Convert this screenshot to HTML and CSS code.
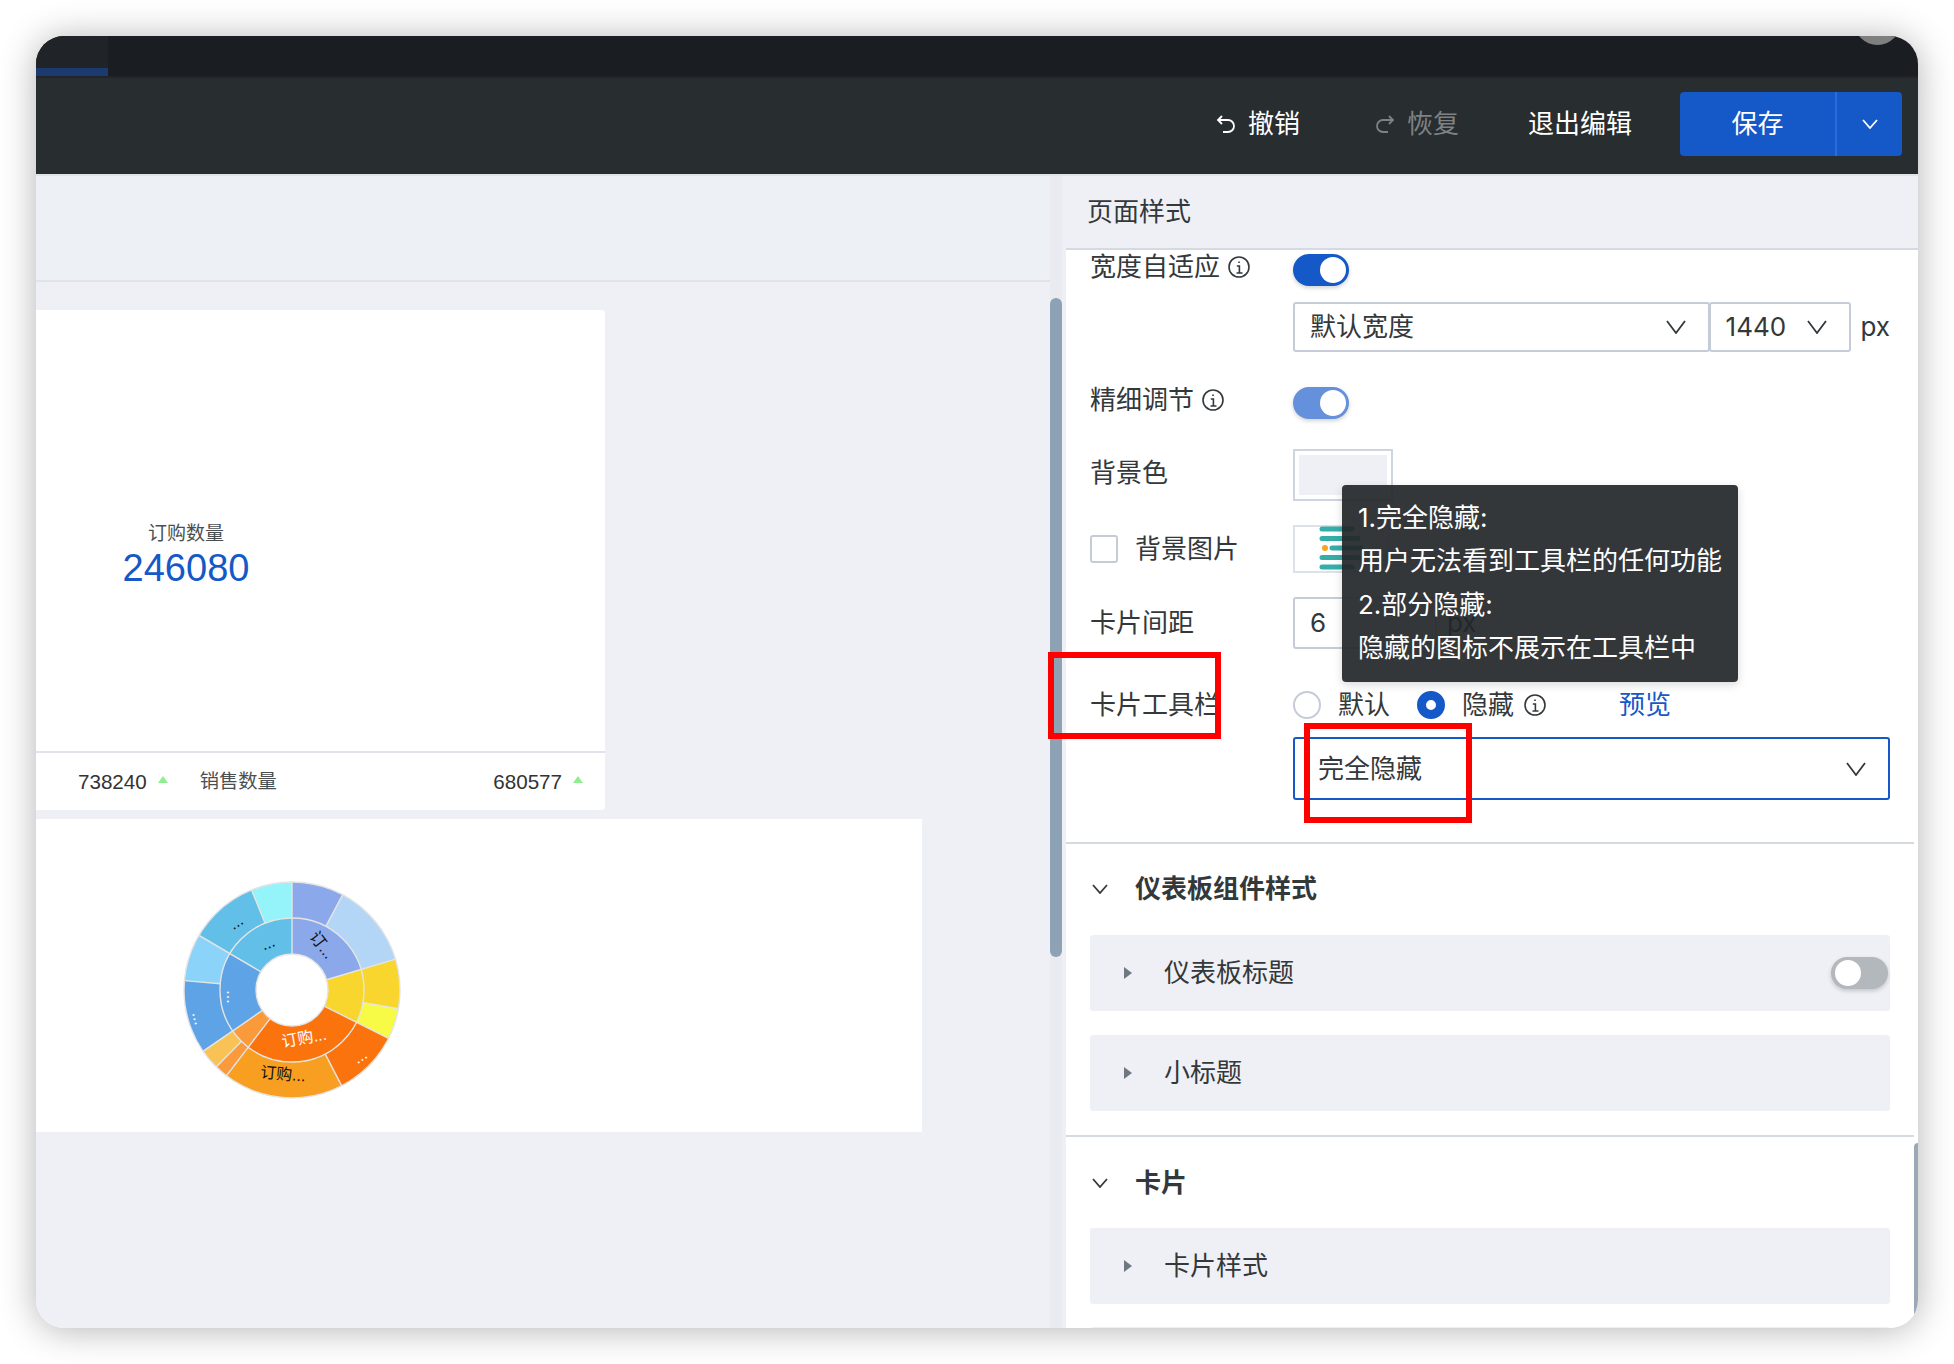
FILE: index.html
```html
<!DOCTYPE html>
<html lang="zh">
<head>
<meta charset="utf-8">
<title>页面样式</title>
<link rel="stylesheet" href="styles.css">
</head>
<body>
<div class="window">
  <div class="tabbar"><div class="tab"></div></div>
  <div class="toolbar">
    <div class="tool"><svg class="tool-icon" viewBox="0 0 22 22"><path d="M7 3 3 7l4 4M3 7h10a6 6 0 0 1 0 12H8"/></svg><span>撤销</span></div>
    <div class="tool tool-off"><svg class="tool-icon" viewBox="0 0 22 22"><path d="M15 3l4 4-4 4M19 7H9a6 6 0 0 0 0 12h5"/></svg><span>恢复</span></div>
    <div class="tool tool-exit">退出编辑</div>
    <div class="save"><div class="save-main">保存</div><div class="save-more"><svg class="chev-sm" viewBox="0 0 16 10"><path d="M1 1l7 8 7-8"/></svg></div></div>
  </div>
  <div class="main">
    <div class="canvas">
      <div class="band"></div>
      <div class="card-kpi">
        <div class="kpi-body">
          <div class="kpi-block">
            <div class="kpi-label">订购数量</div>
            <div class="kpi-num">246080</div>
          </div>
        </div>
        <div class="kpi-foot">
          <span class="foot-num">738240</span><span class="tri"></span>
          <span class="foot-label">销售数量</span>
          <span class="foot-num foot-push">680577</span><span class="tri"></span>
        </div>
      </div>
      <div class="card-chart">
        <svg class="sunburst" viewBox="-110 -110 220 220">
          <g fill="none" stroke-width="36">
            <circle r="90" pathLength="360" stroke="#8aa8ea" stroke-dasharray="28 360" transform="rotate(-90)"/>
            <circle r="90" pathLength="360" stroke="#b3d6f7" stroke-dasharray="45.4 360" transform="rotate(-62)"/>
            <circle r="90" pathLength="360" stroke="#f8d62d" stroke-dasharray="26.6 360" transform="rotate(-16.6)"/>
            <circle r="90" pathLength="360" stroke="#f8fb45" stroke-dasharray="16.5 360" transform="rotate(10)"/>
            <circle r="90" pathLength="360" stroke="#fb730c" stroke-dasharray="36.1 360" transform="rotate(26.5)"/>
            <circle r="90" pathLength="360" stroke="#f89e20" stroke-dasharray="64.7 360" transform="rotate(62.6)"/>
            <circle r="90" pathLength="360" stroke="#fb9a3b" stroke-dasharray="7.3 360" transform="rotate(127.3)"/>
            <circle r="90" pathLength="360" stroke="#f8c255" stroke-dasharray="11.1 360" transform="rotate(134.6)"/>
            <circle r="90" pathLength="360" stroke="#5ea3e6" stroke-dasharray="39.3 360" transform="rotate(145.7)"/>
            <circle r="90" pathLength="360" stroke="#8bd3f9" stroke-dasharray="25.8 360" transform="rotate(185)"/>
            <circle r="90" pathLength="360" stroke="#62bfe8" stroke-dasharray="37.2 360" transform="rotate(210.8)"/>
            <circle r="90" pathLength="360" stroke="#94f4fa" stroke-dasharray="22 360" transform="rotate(248)"/>
            <circle r="54" pathLength="360" stroke="#8aa8ea" stroke-dasharray="73.4 360" transform="rotate(-90)"/>
            <circle r="54" pathLength="360" stroke="#f8d62d" stroke-dasharray="43.3 360" transform="rotate(-16.6)"/>
            <circle r="54" pathLength="360" stroke="#fb730c" stroke-dasharray="100.8 360" transform="rotate(26.7)"/>
            <circle r="54" pathLength="360" stroke="#fb9a3b" stroke-dasharray="17.7 360" transform="rotate(127.5)"/>
            <circle r="54" pathLength="360" stroke="#5ea3e6" stroke-dasharray="64.8 360" transform="rotate(145.2)"/>
            <circle r="54" pathLength="360" stroke="#62bfe8" stroke-dasharray="60 360" transform="rotate(210)"/>
          </g>
          <g fill="none" stroke="#e4e4e4" stroke-width="1.4">
            <circle r="36"/><circle r="72"/><circle r="108"/>
          </g>
          <g stroke="#e4e4e4" stroke-width="1.4">
            <line y1="-36" y2="-108"/>
            <line y1="-72" y2="-108" transform="rotate(28)"/>
            <line y1="-36" y2="-108" transform="rotate(73.4)"/>
            <line y1="-72" y2="-108" transform="rotate(100)"/>
            <line y1="-36" y2="-108" transform="rotate(116.6)"/>
            <line y1="-72" y2="-108" transform="rotate(152.6)"/>
            <line y1="-36" y2="-108" transform="rotate(217.4)"/>
            <line y1="-72" y2="-108" transform="rotate(224.6)"/>
            <line y1="-36" y2="-108" transform="rotate(235.4)"/>
            <line y1="-72" y2="-108" transform="rotate(275)"/>
            <line y1="-36" y2="-108" transform="rotate(300.4)"/>
            <line y1="-72" y2="-108" transform="rotate(338)"/>
          </g>
          <g class="sb-text">
            <text transform="translate(30 -45) rotate(52)">订...</text>
            <text transform="translate(-24 -47) rotate(-22)">...</text>
            <text transform="translate(-56 -68) rotate(-32)">...</text>
            <text class="sb-white" transform="translate(-60 7) rotate(90)">...</text>
            <text class="sb-white" transform="translate(-93 28) rotate(75)">...</text>
            <text class="sb-white" transform="translate(12 48) rotate(-10)">订购...</text>
            <text transform="translate(-9 84) rotate(5)">订购...</text>
            <text class="sb-white" transform="translate(68 66) rotate(-32)">...</text>
          </g>
        </svg>
      </div>
    </div>
    <div class="track"><div class="thumb"></div></div>
    <div class="strip"></div>
    <div class="panel">
      <div class="panel-head">页面样式</div>
      <div class="panel-body">
        <div class="row row-1">
          <div class="label label-top">宽度自适应<svg class="info" viewBox="0 0 24 24"><circle cx="12" cy="12" r="10"/><path d="M12 6.5v1.6M9.8 11H12.4v7M9.5 18h6"/></svg></div>
          <div class="toggle"><i class="knob"></i></div>
        </div>
        <div class="row row-2">
          <div class="label"></div>
          <div class="select select-wide"><span>默认宽度</span><svg class="chev" viewBox="0 0 20 14"><path d="M1 1l9 12 9-12"/></svg></div>
          <div class="select select-num"><span>1440</span><svg class="chev" viewBox="0 0 20 14"><path d="M1 1l9 12 9-12"/></svg></div>
          <span class="unit">px</span>
        </div>
        <div class="row row-3">
          <div class="label label-top">精细调节<svg class="info" viewBox="0 0 24 24"><circle cx="12" cy="12" r="10"/><path d="M12 6.5v1.6M9.8 11H12.4v7M9.5 18h6"/></svg></div>
          <div class="toggle toggle-soft"><i class="knob"></i></div>
        </div>
        <div class="row row-4">
          <div class="label label-swatch">背景色</div>
          <div class="swatch"><div class="swatch-fill"></div></div>
        </div>
        <div class="row row-5">
          <div class="label"><span class="check"></span>背景图片</div>
          <div class="picture">
            <svg class="bars" viewBox="0 0 44 46">
              <g stroke="#35aeaa" stroke-width="5" stroke-linecap="round">
                <path d="M3 3h30M3 12.500h36M13 22h30M3 31.500h36M3 41h30"/>
              </g>
              <circle cx="6" cy="22" r="3" fill="#f5a623"/>
            </svg>
          </div>
        </div>
        <div class="row row-6">
          <div class="label">卡片间距</div>
          <div class="input">6</div>
          <span class="unit unit-gap">px</span>
        </div>
        <div class="row row-7">
          <div class="label">卡片工具栏</div>
          <span class="radio"></span><span class="radio-text">默认</span>
          <span class="radio radio-on"></span><span class="radio-text">隐藏</span>
          <svg class="info" viewBox="0 0 24 24"><circle cx="12" cy="12" r="10"/><path d="M12 6.5v1.6M9.8 11H12.4v7M9.5 18h6"/></svg>
          <span class="link">预览</span>
        </div>
        <div class="row row-8">
          <div class="label"></div>
          <div class="select select-focus"><span>完全隐藏</span><svg class="chev" viewBox="0 0 20 14"><path d="M1 1l9 12 9-12"/></svg></div>
        </div>
        <div class="divider divider-1"></div>
        <div class="section"><svg class="chev-sm" viewBox="0 0 16 10"><path d="M1 1l7 8 7-8"/></svg><span>仪表板组件样式</span></div>
        <div class="item"><span class="caret"></span><span>仪表板标题</span><div class="toggle toggle-off"><i class="knob"></i></div></div>
        <div class="item item-next"><span class="caret"></span><span>小标题</span></div>
        <div class="divider divider-2"></div>
        <div class="section section-2"><svg class="chev-sm" viewBox="0 0 16 10"><path d="M1 1l7 8 7-8"/></svg><span>卡片</span></div>
        <div class="item item-tight"><span class="caret"></span><span>卡片样式</span></div>
        <div class="item item-clip"></div>
      </div>
    </div>
  </div>
  <div class="avatar"></div>
  <div class="panel-scroll"></div>
  <div class="tooltip">
    <p>1.完全隐藏:</p>
    <p>用户无法看到工具栏的任何功能</p>
    <p>2.部分隐藏:</p>
    <p>隐藏的图标不展示在工具栏中</p>
  </div>
  <div class="mark mark-label"></div>
  <div class="mark mark-select"></div>
</div>
</body>
</html>
```

FILE: styles.css
```css
* { box-sizing: border-box; }
html, body { margin: 0; padding: 0; background: #fff; }
body {
  width: 1954px;
  height: 1364px;
  overflow: hidden;
  padding: 36px 36px 0;
  font-family: "Inter", "Noto Sans CJK SC", sans-serif;
  font-size: 26px;
  line-height: 26px;
  color: #33383b;
}
.window {
  position: relative;
  width: 1882px;
  height: 1292px;
  border-radius: 28px;
  overflow: hidden;
  display: flex;
  flex-direction: column;
  background: #eff0f5;
}
body::before {
  content: "";
  position: absolute;
  left: 36px;
  top: 36px;
  width: 1882px;
  height: 1292px;
  border-radius: 28px;
  box-shadow: 0 2px 36px rgba(0, 0, 0, .3);
}

/* top chrome */
.tabbar { height: 40px; flex: none; background: #1a1d21; }
.tab { width: 72px; height: 40px; background: #202327; border-bottom: 8px solid #1a3a70; }
.toolbar {
  height: 100px;
  flex: none;
  display: flex;
  align-items: center;
  justify-content: flex-end;
  padding: 0 16px 4px 0;
  background: #282d30;
  border-top: 2px solid #212529;
  border-bottom: 2px solid #e0e4ea;
  color: #fff;
}
.tool { display: flex; align-items: center; gap: 11px; margin-right: 74px; }
.tool-off { color: #7e8285; margin-right: 69px; }
.tool-exit { margin-right: 48px; }
.tool-icon { width: 22px; height: 22px; fill: none; stroke: currentColor; stroke-width: 1.8; }
.save { display: flex; width: 222px; height: 64px; border-radius: 4px; background: #1558c8; }
.save-main { width: 157px; display: flex; align-items: center; justify-content: center; border-right: 2px solid #2a6ce0; }
.save-more { flex: 1; display: flex; align-items: center; justify-content: center; }
.chev-sm { width: 16px; height: 10px; fill: none; stroke: currentColor; stroke-width: 1.8; }

/* layout */
.main { flex: 1; display: flex; min-height: 0; }
.canvas { width: 1014px; flex: none; }
.band { height: 106px; background: #edf0f5; border-bottom: 2px solid #e0e4ea; }
.card-kpi {
  width: 569px;
  height: 500px;
  margin-top: 28px;
  display: flex;
  flex-direction: column;
  background: #fff;
  border-radius: 0 4px 4px 0;
}
.kpi-body { flex: 1; padding: 211px 0 0 87px; }
.kpi-block { width: 126px; display: flex; flex-direction: column; align-items: center; }
.kpi-label { font-size: 19px; font-family: "Liberation Sans", "Noto Sans CJK SC", sans-serif; color: #4a4f52; white-space: nowrap; }
.kpi-num {
  margin-top: 1px;
  font-family: "Liberation Sans", sans-serif;
  font-size: 38px;
  line-height: 40px;
  color: #1558c8;
}
.kpi-foot {
  height: 59px;
  flex: none;
  display: flex;
  align-items: center;
  padding: 0 22px 0 42px;
  border-top: 2px solid #e0e4ea;
  font-family: "Liberation Sans", "Noto Sans CJK SC", sans-serif;
  font-size: 20.600px;
  color: #333;
}
.tri {
  width: 0;
  height: 0;
  margin: -4px 0 0 11px;
  border-left: 5px solid transparent;
  border-right: 5px solid transparent;
  border-bottom: 7px solid #90ee90;
}
.foot-label { margin-left: 32px; font-size: 19.300px; color: #4a4f52; }
.foot-push { margin-left: auto; }
.card-chart { width: 886px; height: 313px; margin-top: 9px; padding: 61px 0 0 146px; background: #fff; }
.sunburst { display: block; width: 220px; height: 220px; }
.sb-text text {
  font-family: "Liberation Sans", "Noto Sans CJK SC", sans-serif;
  font-size: 16px;
  text-anchor: middle;
  dominant-baseline: central;
  fill: #111;
}
.sb-text .sb-white { fill: #fff; }

.track { width: 12px; flex: none; padding-top: 122px; background: #e9ebf1; }
.thumb { height: 659px; background: #8ea2b5; border-radius: 6px; }
.strip { width: 4px; flex: none; background: #eff0f5; }

/* settings panel */
.panel { flex: 1; min-width: 0; background: #fff; overflow: hidden; }
.panel-head {
  height: 74px;
  padding: 23px 0 0 21px;
  background: #eff0f5;
  border-bottom: 2px solid #d5dae0;
}
.panel-body { padding: 0 28px 0 24px; }
.row { display: flex; align-items: center; }
.row-1 { margin-top: 4px; align-items: flex-start; }
.row-2 { margin-top: 16px; }
.row-3 { margin-top: 35px; align-items: flex-start; }
.row-4 { margin-top: 30px; align-items: flex-start; }
.row-5 { margin-top: 24px; }
.row-6 { margin-top: 24px; }
.row-7 { margin-top: 42px; }
.row-8 { margin-top: 18px; }
.label { width: 203px; flex: none; display: flex; align-items: center; white-space: nowrap; }
.label-swatch { margin-top: 11px; }
.info { width: 24px; height: 24px; margin-left: 7px; flex: none; fill: none; stroke: #33383b; stroke-width: 1.6; }

.toggle {
  position: relative;
  width: 56px;
  height: 32px;
  flex: none;
  border-radius: 16px;
  background: #1558c8;
  box-shadow: 0 2px 4px rgba(0, 0, 0, .18);
}
.toggle-soft { background: #6490dc; }
.toggle-off { margin-left: auto; margin-right: 2px; width: 57px; background: #b3b8bc; }
.knob {
  position: absolute;
  top: 3px;
  right: 3px;
  width: 26px;
  height: 26px;
  border-radius: 50%;
  background: #fff;
}
.toggle-off .knob { right: auto; left: 4px; }

.select {
  display: flex;
  align-items: center;
  justify-content: space-between;
  height: 50px;
  padding: 0 22px 0 15px;
  border: 2px solid #c5ccd8;
  border-radius: 3px;
  background: #fff;
}
.select-wide { width: 417px; }
.select-num { width: 143px; margin-left: -1px; padding-right: 22px; }
.select-focus { width: 597px; height: 63px; padding: 0 22px 0 23px; border-color: #1558c8; }
.chev { width: 20px; height: 14px; flex: none; fill: none; stroke: #33383b; stroke-width: 1.8; }
.unit { margin-left: 9px; }
.unit-gap { margin-left: 10px; }

.swatch { width: 100px; height: 52px; padding: 4px; border: 2px solid #cfd5e0; }
.swatch-fill { height: 100%; background: #eff0f5; }
.check {
  width: 28px;
  height: 28px;
  margin-right: 17px;
  border: 2px solid #c5ccd8;
  border-radius: 3px;
}
.picture {
  width: 96px;
  height: 48px;
  display: flex;
  align-items: center;
  padding-left: 24px;
  border: 2px solid #dde1e8;
}
.bars { width: 44px; height: 46px; flex: none; }
.input {
  width: 144px;
  height: 52px;
  display: flex;
  align-items: center;
  padding-left: 15px;
  border: 2px solid #c5ccd8;
  border-radius: 3px;
}
.radio {
  width: 28px;
  height: 28px;
  flex: none;
  border: 2px solid #c5ccd8;
  border-radius: 50%;
}
.radio-on { margin-left: 27px; border: 9px solid #1558c8; background: #fff; }
.radio-text { margin-left: 17px; }
.row-7 .info { margin-left: 9px; }
.link { margin-left: 72px; color: #1558c8; }

.divider { height: 2px; margin: 0 -24px; background: #d5dae0; }
.divider-1 { margin-top: 42px; }
.divider-2 { margin-top: 24px; }
.section { display: flex; align-items: center; margin-top: 32px; font-weight: 700; }
.section .chev-sm { margin: 0 27px 0 2px; color: #33383b; }
.section-2 { margin-top: 33px; }
.item {
  display: flex;
  align-items: center;
  height: 76px;
  margin-top: 33px;
  padding: 0 0 0 34px;
  background: #eff0f5;
  border-radius: 3px;
}
.item-next { margin-top: 24px; }
.item-tight { margin-top: 32px; }
.item-clip { margin-top: 23px; }
.caret {
  width: 0;
  height: 0;
  margin-right: 32px;
  border-top: 6px solid transparent;
  border-bottom: 6px solid transparent;
  border-left: 8px solid #6f7781;
}

/* overlays */
.avatar {
  position: absolute;
  left: 1818px;
  top: -38px;
  width: 47px;
  height: 47px;
  border-radius: 50%;
  background: #7f7f7f;
}
.panel-scroll {
  position: absolute;
  right: 0;
  bottom: 0;
  width: 4px;
  height: 185px;
  background: #9aa8b8;
  border-radius: 4px 0 0 0;
}
.tooltip {
  position: absolute;
  left: 1306px;
  top: 449px;
  width: 396px;
  height: 197px;
  padding: 11px 16px;
  background: rgba(35, 38, 41, .92);
  border-radius: 4px;
  box-shadow: 0 3px 10px rgba(0, 0, 0, .15);
  color: #fff;
  white-space: nowrap;
}
.tooltip p { margin: 0; line-height: 43.300px; }
.mark { position: absolute; border: 6px solid #f00; }
.mark-label { left: 1012px; top: 616px; width: 173px; height: 87px; }
.mark-select { left: 1268px; top: 687px; width: 168px; height: 100px; }
```
